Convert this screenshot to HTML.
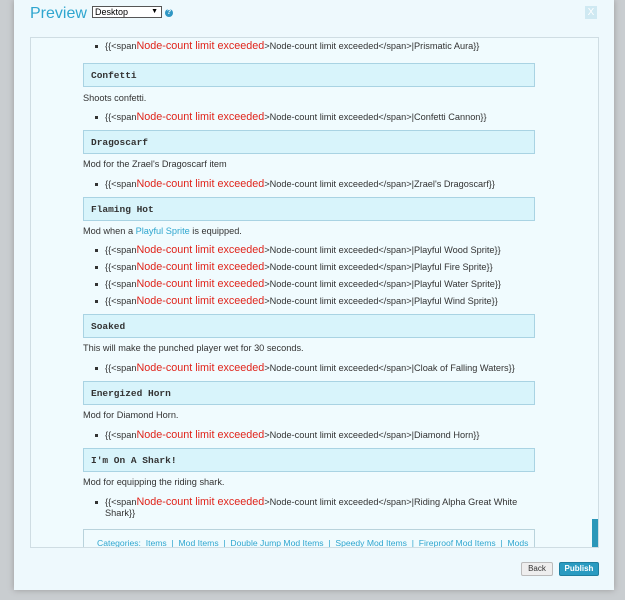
<!DOCTYPE html>
<html><head><style>
body{margin:0;width:625px;height:600px;background:#c9cdd0;position:relative;overflow:hidden;font-family:"Liberation Sans",Arial,sans-serif;}
.modal{position:absolute;left:14px;top:0;width:600px;height:590px;background:#eef9fd;box-shadow:0 0 6px #999;}
.title{position:absolute;left:16px;top:5px;font-size:16px;color:#2fa6cf;}
.sel{position:absolute;left:78px;top:6px;width:66px;height:10px;border:1px solid #555;background:#fff;font-size:9px;line-height:10px;padding-left:2px;}
.sel:after{content:"▼";position:absolute;right:3px;top:0;font-size:7px}
.q{position:absolute;left:151px;top:9px;width:8px;height:8px;border-radius:50%;background:#2f97c4;color:#fff;font-size:7px;text-align:center;line-height:8px;font-weight:bold}
.x{position:absolute;left:571px;top:6px;width:12px;height:13px;background:#cfe9f2;color:#fff;font-size:10px;text-align:center;line-height:13px}
.panel{position:absolute;left:16px;top:37px;width:567px;height:509px;border:1px solid #cfdde3;background:#f0fbfe;overflow:hidden;}
.sb{position:absolute;left:561px;top:481px;width:6px;height:28px;background:#2a97b9}
.c{position:absolute;left:52px;top:0;width:460px;font-size:9.2px;color:#333;}
.h{position:absolute;left:0;width:452px;height:24px;background:#d8f4fb;border:1px solid #a9d3e3;font-family:"Liberation Mono",monospace;font-weight:bold;font-size:9.5px;line-height:24px;padding-left:7px;box-sizing:border-box;color:#333}
.t{position:absolute;left:0;white-space:nowrap}
.b{position:absolute;left:22px;white-space:nowrap}
.b:before{content:"";position:absolute;left:-10px;top:5px;width:3px;height:3px;background:#333}
.r{color:#e0241b;font-size:10.8px}
a{color:#2fa6cf}
.cat{position:absolute;left:0;top:491px;width:452px;height:30px;border:1px solid #b9d3dc;box-sizing:border-box;font-size:8.6px;color:#2fa6cf;padding:8px 0 0 13px;white-space:nowrap}
.btn{position:absolute;top:562px;height:12px;font-size:8px;line-height:12px;text-align:center;border-radius:2px}
</style></head><body>
<div class="modal">
<div class="title">Preview</div><div class="sel">Desktop</div><div class="q">?</div><div class="x">X</div>
<div class="panel"><div class="c">
<div class="b" style="top:2px">{{&lt;span<span class="r">Node-count limit exceeded</span>&gt;Node-count limit exceeded&lt;/span&gt;|Prismatic Aura}}</div>
<div class="h" style="top:25px">Confetti</div>
<div class="t" style="top:55px">Shoots confetti.</div>
<div class="b" style="top:73px">{{&lt;span<span class="r">Node-count limit exceeded</span>&gt;Node-count limit exceeded&lt;/span&gt;|Confetti Cannon}}</div>
<div class="h" style="top:92px">Dragoscarf</div>
<div class="t" style="top:121px">Mod for the Zrael's Dragoscarf item</div>
<div class="b" style="top:140px">{{&lt;span<span class="r">Node-count limit exceeded</span>&gt;Node-count limit exceeded&lt;/span&gt;|Zrael's Dragoscarf}}</div>
<div class="h" style="top:159px">Flaming Hot</div>
<div class="t" style="top:188px">Mod when a <a>Playful Sprite</a> is equipped.</div>
<div class="b" style="top:206px">{{&lt;span<span class="r">Node-count limit exceeded</span>&gt;Node-count limit exceeded&lt;/span&gt;|Playful Wood Sprite}}</div>
<div class="b" style="top:223px">{{&lt;span<span class="r">Node-count limit exceeded</span>&gt;Node-count limit exceeded&lt;/span&gt;|Playful Fire Sprite}}</div>
<div class="b" style="top:240px">{{&lt;span<span class="r">Node-count limit exceeded</span>&gt;Node-count limit exceeded&lt;/span&gt;|Playful Water Sprite}}</div>
<div class="b" style="top:257px">{{&lt;span<span class="r">Node-count limit exceeded</span>&gt;Node-count limit exceeded&lt;/span&gt;|Playful Wind Sprite}}</div>
<div class="h" style="top:276px">Soaked</div>
<div class="t" style="top:305px">This will make the punched player wet for 30 seconds.</div>
<div class="b" style="top:324px">{{&lt;span<span class="r">Node-count limit exceeded</span>&gt;Node-count limit exceeded&lt;/span&gt;|Cloak of Falling Waters}}</div>
<div class="h" style="top:343px">Energized Horn</div>
<div class="t" style="top:372px">Mod for Diamond Horn.</div>
<div class="b" style="top:391px">{{&lt;span<span class="r">Node-count limit exceeded</span>&gt;Node-count limit exceeded&lt;/span&gt;|Diamond Horn}}</div>
<div class="h" style="top:410px">I'm On A Shark!</div>
<div class="t" style="top:439px">Mod for equipping the riding shark.</div>
<div class="b" style="top:458px">{{&lt;span<span class="r">Node-count limit exceeded</span>&gt;Node-count limit exceeded&lt;/span&gt;|Riding Alpha Great White<br>Shark}}</div>
<div class="cat">Categories: &nbsp;Items &nbsp;| &nbsp;Mod Items &nbsp;| &nbsp;Double Jump Mod Items &nbsp;| &nbsp;Speedy Mod Items &nbsp;| &nbsp;Fireproof Mod Items &nbsp;| &nbsp;Mods</div>
</div><div class="sb"></div></div>
<div class="btn" style="left:507px;width:30px;background:#eee;border:1px solid #bbb;color:#333">Back</div>
<div class="btn" style="left:545px;width:38px;background:#2a9bc1;border:1px solid #1f7f9f;color:#fff;font-weight:bold">Publish</div>
</div>
</body></html>
